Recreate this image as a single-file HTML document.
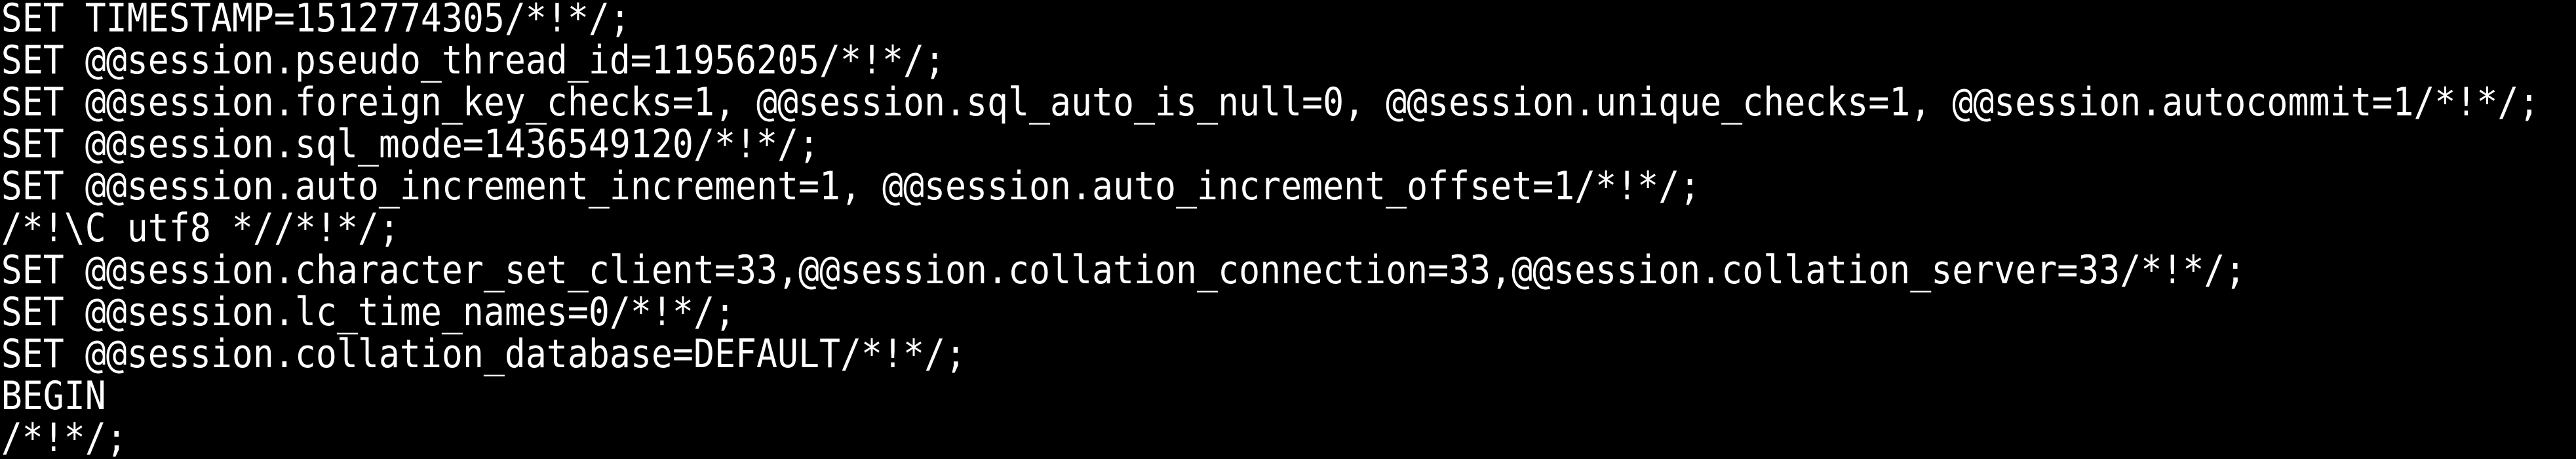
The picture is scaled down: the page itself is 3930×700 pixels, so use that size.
<!DOCTYPE html>
<html><head><meta charset="utf-8"><style>
html,body{margin:0;padding:0;background:#000;width:3930px;height:700px;overflow:hidden}
pre{margin:-4px 0 0 0;padding:0 0 0 2px;color:#fff;font-family:"DejaVu Sans Mono","Liberation Mono",monospace;font-size:60px;line-height:64px;white-space:pre;transform:scaleX(0.886);transform-origin:0 0}
</style></head><body><pre>SET TIMESTAMP=1512774305/*!*/;
SET @@session.pseudo_thread_id=11956205/*!*/;
SET @@session.foreign_key_checks=1, @@session.sql_auto_is_null=0, @@session.unique_checks=1, @@session.autocommit=1/*!*/;
SET @@session.sql_mode=1436549120/*!*/;
SET @@session.auto_increment_increment=1, @@session.auto_increment_offset=1/*!*/;
/*!\C utf8 *//*!*/;
SET @@session.character_set_client=33,@@session.collation_connection=33,@@session.collation_server=33/*!*/;
SET @@session.lc_time_names=0/*!*/;
SET @@session.collation_database=DEFAULT/*!*/;
BEGIN
/*!*/;</pre></body></html>
